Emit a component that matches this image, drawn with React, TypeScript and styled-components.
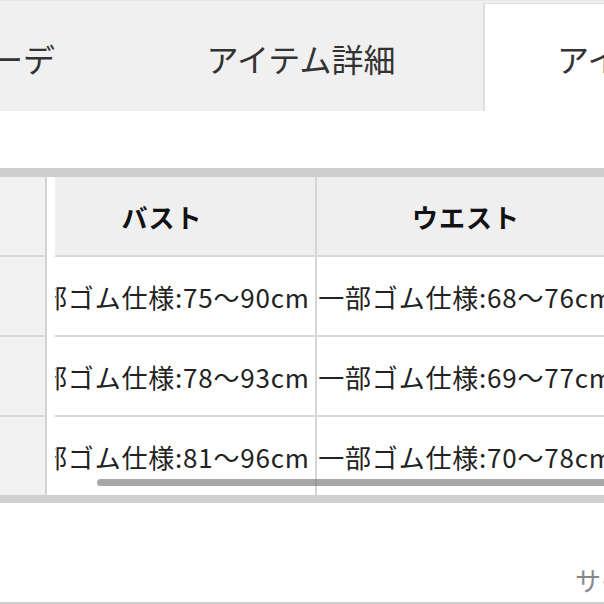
import React, { useLayoutEffect, useRef } from "react";
import styled, { createGlobalStyle } from "styled-components";

const GlobalStyle = createGlobalStyle`
  html, body {
    margin: 0;
    padding: 0;
    background: #ffffff;
    overflow: hidden;
  }
  body {
    font-family: "Noto Sans CJK JP", "Noto Sans", sans-serif;
    color: #222;
  }
  * { box-sizing: border-box; }
`;

const Page = styled.div`
  width: 604px;
  height: 604px;
  display: flex;
  flex-direction: column;
  overflow: hidden;
`;

const TabBar = styled.div`
  height: 111px;
  flex: none;
  background: #f0f0f0;
  border-top: 1px solid #e6e6e6;
  overflow: hidden;
`;

const TabStrip = styled.div`
  display: flex;
  height: 100%;
  padding-top: 2px;
  width: 100%;
  overflow: hidden;
`;

const Tab = styled.div<{ $active?: boolean; $w?: number }>`
  flex: none;
  width: ${(p) => p.$w ?? 366}px;
  height: 100%;
  display: flex;
  align-items: center;
  justify-content: center;
  font-size: 32px;
  line-height: 1;
  color: #333;
  white-space: nowrap;
  background: ${(p) => (p.$active ? "#ffffff" : "transparent")};
  border-top: ${(p) => (p.$active ? "1px solid #dedede" : "1px solid transparent")};
  border-left: ${(p) => (p.$active ? "2px solid #dedede" : "2px solid transparent")};
`;

const Spacer = styled.div`
  height: 57px;
  flex: none;
`;

const TableWrap = styled.div`
  flex: none;
  display: flex;
  border-top: 9px solid #cecece;
  border-bottom: 8px solid #d0d0d0;
`;

const FixedCol = styled.div`
  flex: none;
  width: 55px;
  display: flex;
  flex-direction: column;
  border-right: 8px solid #ffffff;
`;

const FixedCell = styled.div<{ $head?: boolean }>`
  height: ${(p) => (p.$head ? "78px" : "80px")};
  background: #f1f1f1;
  border-right: 2px solid #d2d2d2;
  border-top: ${(p) => (p.$head ? "none" : "2px solid #d9d9d9")};
`;

const ScrollArea = styled.div`
  position: relative;
  flex: 1;
  min-width: 0;
`;

const Scroller = styled.div`
  width: 100%;
  overflow: hidden;
`;

const Grid = styled.div`
  display: flex;
  flex-direction: column;
  width: max-content;
`;

const Row = styled.div<{ $head?: boolean }>`
  display: flex;
  height: ${(p) => (p.$head ? "78px" : "80px")};
  border-top: ${(p) => (p.$head ? "none" : "2px solid #d9d9d9")};
  background: ${(p) => (p.$head ? "#efefef" : "#ffffff")};
`;

const Cell = styled.div<{ $w: number; $head?: boolean }>`
  flex: none;
  width: ${(p) => p.$w}px;
  display: flex;
  align-items: center;
  justify-content: center;
  white-space: nowrap;
  border-right: 2px solid #d6d6d6;
  font-size: 26px;
  font-weight: ${(p) => (p.$head ? 700 : 400)};
  color: ${(p) => (p.$head ? "#111" : "#222")};
  letter-spacing: ${(p) => (p.$head ? "1px" : "0.8px")};
`;

const Thumb = styled.div`
  position: absolute;
  left: 42px;
  right: -20px;
  bottom: 9px;
  height: 7px;
  border-radius: 4px;
  background: rgba(120, 120, 120, 0.65);
`;

const Footer = styled.div`
  flex: none;
  height: 101px;
  padding: 64px 0 0 575px;
  font-size: 26px;
  line-height: 26px;
  color: #888;
  white-space: nowrap;
  overflow: hidden;
  border-bottom: 2px solid #cfcfcf;
`;

const columns = [
  { key: "bust", label: "バスト", w: 308 },
  { key: "waist", label: "ウエスト", w: 300 },
  { key: "hip", label: "ヒップ", w: 300 },
];

const rows = [
  { bust: "一部ゴム仕様:75～90cm", waist: "一部ゴム仕様:68～76cm", hip: "88cm" },
  { bust: "一部ゴム仕様:78～93cm", waist: "一部ゴム仕様:69～77cm", hip: "91cm" },
  { bust: "一部ゴム仕様:81～96cm", waist: "一部ゴム仕様:70～78cm", hip: "94cm" },
];

export default function App() {
  const tabRef = useRef<HTMLDivElement>(null);
  const tableRef = useRef<HTMLDivElement>(null);

  useLayoutEffect(() => {
    if (tabRef.current) tabRef.current.scrollLeft = 233;
    if (tableRef.current) tableRef.current.scrollLeft = 46;
  }, []);

  return (
    <>
      <GlobalStyle />
      <Page>
        <TabBar>
          <TabStrip ref={tabRef}>
            <Tab $w={350}>スタッフコーデ</Tab>
            <Tab>アイテム詳細</Tab>
            <Tab $active>アイテムサイズ</Tab>
          </TabStrip>
        </TabBar>
        <Spacer />
        <TableWrap>
          <FixedCol>
            <FixedCell $head />
            {rows.map((_, i) => (
              <FixedCell key={i} />
            ))}
          </FixedCol>
          <ScrollArea>
            <Scroller ref={tableRef}>
              <Grid>
                <Row $head>
                  {columns.map((c) => (
                    <Cell key={c.key} $w={c.w} $head>
                      {c.label}
                    </Cell>
                  ))}
                </Row>
                {rows.map((r, i) => (
                  <Row key={i}>
                    {columns.map((c) => (
                      <Cell key={c.key} $w={c.w}>
                        {r[c.key as keyof typeof r]}
                      </Cell>
                    ))}
                  </Row>
                ))}
              </Grid>
            </Scroller>
            <Thumb />
          </ScrollArea>
        </TableWrap>
        <Footer>サイズの測り方</Footer>
      </Page>
    </>
  );
}
